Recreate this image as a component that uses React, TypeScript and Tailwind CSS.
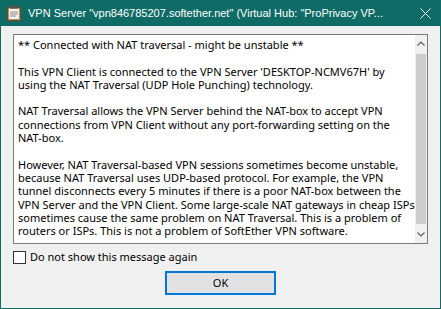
import React from "react";

const paragraphs = [
  ["** Connected with NAT traversal - might be unstable **"],
  [
    "This VPN Client is connected to the VPN Server 'DESKTOP-NCMV67H' by",
    "using the NAT Traversal (UDP Hole Punching) technology.",
  ],
  [
    "NAT Traversal allows the VPN Server behind the NAT-box to accept VPN",
    "connections from VPN Client without any port-forwarding setting on the",
    "NAT-box.",
  ],
  [
    "However, NAT Traversal-based VPN sessions sometimes become unstable,",
    "because NAT Traversal uses UDP-based protocol. For example, the VPN",
    "tunnel disconnects every 5 minutes if there is a poor NAT-box between the",
    "VPN Server and the VPN Client. Some large-scale NAT gateways in cheap ISPs",
    "sometimes cause the same problem on NAT Traversal. This is a problem of",
    "routers or ISPs. This is not a problem of SoftEther VPN software.",
  ],
];

function ClipboardIcon() {
  return (
    <svg width="14" height="16" viewBox="0 0 14 16">
      <rect x="0.5" y="2.5" width="13" height="13" fill="#b48a55" stroke="#6b4e2a" />
      <rect x="2" y="4" width="10" height="10" fill="#f4f4f4" />
      <rect x="4" y="0.5" width="6" height="3" fill="#555" />
      <line x1="3" y1="7" x2="11" y2="7" stroke="#888" />
      <line x1="3" y1="9" x2="11" y2="9" stroke="#888" />
      <line x1="3" y1="11" x2="9" y2="11" stroke="#888" />
    </svg>
  );
}

export default function App() {
  return (
    <div
      className="w-[441px] h-[309px] flex flex-col bg-[#f0f0f0] border border-t-0 border-[#0f6b66] overflow-hidden"
      style={{ fontFamily: "'Noto Sans', 'Liberation Sans', sans-serif" }}
    >
      <div className="h-[26px] shrink-0 bg-[#0f6b66] flex items-center pl-[6px] text-white">
        <ClipboardIcon />
        <span
          className="ml-[7px] text-[11px] whitespace-nowrap flex-1 overflow-hidden"
          style={{ fontFamily: "'Liberation Sans', sans-serif" }}
        >
          VPN Server "vpn846785207.softether.net" (Virtual Hub: "ProPrivacy VP...
        </span>
        <svg width="11" height="11" viewBox="0 0 11 11" className="mr-[9px] ml-2 shrink-0">
          <path d="M0.5 0.5 L10.5 10.5 M10.5 0.5 L0.5 10.5" stroke="white" strokeWidth="1" />
        </svg>
      </div>
      <div className="flex-1 flex flex-col px-[12px] pt-[8px]">
        <div className="h-[210px] bg-white border border-[#7a7a7a] flex">
          <div className="flex-1 pl-[4px] pt-[3px] text-[11px] leading-[13.3px] text-black flex flex-col gap-[13.3px]">
            {paragraphs.map((p, i) => (
              <div key={i}>
                {p.map((l, j) => (
                  <div key={j} className="whitespace-nowrap">{l}</div>
                ))}
              </div>
            ))}
          </div>
          <div className="w-[17px] bg-[#f0f0f0] flex flex-col">
            <div className="h-[17px] flex items-center justify-center">
              <svg width="8" height="5" viewBox="0 0 8 5">
                <path d="M0.5 4.5 L4 1 L7.5 4.5" stroke="#606060" strokeWidth="1.2" fill="none" />
              </svg>
            </div>
            <div className="flex-1 mx-[1px] my-[2px] bg-[#cdcdcd]" />
            <div className="h-[17px] flex items-center justify-center">
              <svg width="8" height="5" viewBox="0 0 8 5">
                <path d="M0.5 0.5 L4 4 L7.5 0.5" stroke="#606060" strokeWidth="1.2" fill="none" />
              </svg>
            </div>
          </div>
        </div>
        <div className="mt-[6px] flex items-center h-[14px]">
          <div className="w-[13px] h-[13px] border border-[#333] bg-white" />
          <span className="ml-[4px] text-[11px] text-black">Do not show this message again</span>
        </div>
        <div className="mt-[7px] flex justify-center">
          <button className="w-[111px] h-[24px] border-2 border-[#0078d7] bg-[#e1e1e1] text-[11px] text-black">
            OK
          </button>
        </div>
      </div>
    </div>
  );
}
